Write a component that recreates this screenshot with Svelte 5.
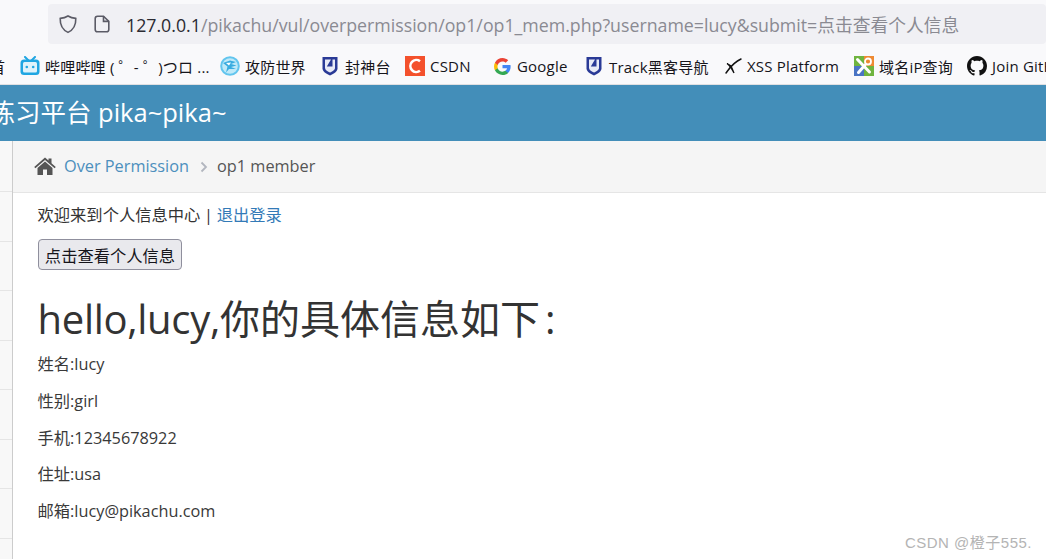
<script>
	const bookmarks = [
		{ icon: 'bili', label: '哔哩哔哩 ( ゜- ゜)つロ ...', width: 200 },
		{ icon: 'gongfang', label: '攻防世界', width: 100 },
		{ icon: 'track', label: '封神台', width: 85 },
		{ icon: 'csdn', label: 'CSDN', width: 87 },
		{ icon: 'google', label: 'Google', width: 92 },
		{ icon: 'track', label: 'Track黑客导航', width: 138 },
		{ icon: 'xss', label: 'XSS Platform', width: 132 },
		{ icon: 'ip', label: '域名iP查询', width: 113 },
		{ icon: 'github', label: 'Join GitHub', width: 110 }
	];

	const info = [
		'姓名:lucy',
		'性别:girl',
		'手机:12345678922',
		'住址:usa',
		'邮箱:lucy@pikachu.com'
	];

	const sideRows = [0, 1, 2, 3, 4, 5, 6, 7];
</script>

<div class="page">
	<div class="toolbar">
		<div class="urlbar">
			<svg class="shield" viewBox="0 0 20 20" width="20" height="20" fill="none" stroke="#5b5b66" stroke-width="1.6">
				<path d="M10 2 C7.500 3.600 5 4.200 2.200 4.400 C2 10 3.600 15.400 10 18.400 C16.400 15.400 18 10 17.800 4.400 C15 4.200 12.500 3.600 10 2 Z" />
			</svg>
			<svg class="doc" viewBox="0 0 16 18" width="16" height="18" fill="none" stroke="#5b5b66" stroke-width="1.6">
				<path d="M3.500 1.200 H9.500 L14.800 6.400 V14.500 A2.300 2.300 0 0 1 12.500 16.800 H3.500 A2.300 2.300 0 0 1 1.200 14.500 V3.500 A2.300 2.300 0 0 1 3.500 1.200 Z" />
				<path d="M9.500 1.200 V6.400 H14.800" />
			</svg>
			<span class="url"><b>127.0.0.1</b>/pikachu/vul/overpermission/op1/op1_mem.php?username=lucy&amp;submit=点击查看个人信息</span>
		</div>
	</div>

	<div class="bookmarks">
		<span class="bm cut">首</span>
		{#each bookmarks as b}
			<span class="bm" style="width: {b.width}px">
				<span class="ico">
					{#if b.icon === 'bili'}
						<svg viewBox="0 0 20 20" width="20" height="20">
							<path d="M5 1 L8 4 M15 1 L12 4" stroke="#20a6e2" stroke-width="2" stroke-linecap="round" />
							<rect x="0.500" y="3.500" width="19" height="15.500" rx="3.500" fill="#20a6e2" />
							<rect x="3" y="6" width="14" height="10.500" rx="1.500" fill="#dff3fb" />
							<circle cx="6.800" cy="11" r="1.300" fill="#20a6e2" />
							<circle cx="13.200" cy="11" r="1.300" fill="#20a6e2" />
						</svg>
					{:else if b.icon === 'gongfang'}
						<svg viewBox="0 0 20 20" width="20" height="20">
							<circle cx="10" cy="10" r="9.800" fill="#62c5ee" />
							<circle cx="10" cy="10" r="7.800" fill="#bfe9f8" />
							<path d="M3 7 L10 4.500 L16 6 L11 8 L16.500 9.500 L11 11 L16 13 L9 13 L6 16.500 L7.500 10.500 Z" fill="#39ace0" />
							<path d="M6 7 L11 6.400 L9 9.500 Z" fill="#fff" />
						</svg>
					{:else if b.icon === 'track'}
						<svg viewBox="0 0 16 20" width="16" height="20">
							<path d="M0.500 1 H15.500 V12.500 C15.500 15.500 12 17.500 8 19.500 C4 17.500 0.500 15.500 0.500 12.500 Z" fill="#2a3a96" />
							<path d="M3 3.500 H9 L4.800 10.500 H10.500 V3.500 H13 V12 C13 14 10 15.500 8 16.600 C6 15.500 3 14 3 12 Z" fill="#e8eaf6" />
						</svg>
					{:else if b.icon === 'csdn'}
						<svg viewBox="0 0 20 20" width="20" height="20">
							<rect width="20" height="20" fill="#f4512c" />
							<path d="M15 5.200 A6 6 0 1 0 15 14.800" fill="none" stroke="#fff" stroke-width="2.600" />
						</svg>
					{:else if b.icon === 'google'}
						<svg viewBox="0 0 18 18" width="17" height="17">
							<path d="M17.600 9.200c0-.6-.1-1.200-.2-1.800H9v3.500h4.800c-.2 1.100-.8 2-1.800 2.700v2.200h2.900c1.700-1.600 2.700-3.900 2.700-6.600z" fill="#4285f4" />
							<path d="M9 18c2.400 0 4.500-.8 5.900-2.200L12 13.600c-.8.500-1.800.9-3 .9-2.300 0-4.300-1.600-5-3.700H1v2.300C2.400 16 5.500 18 9 18z" fill="#34a853" />
							<path d="M4 10.700c-.4-1.100-.4-2.300 0-3.400V5H1c-1.300 2.500-1.300 5.500 0 8z" fill="#fbbc05" />
							<path d="M9 3.600c1.300 0 2.500.5 3.400 1.300L15 2.400C13.500 1 11.400 0 9 0 5.500 0 2.400 2 1 5l3 2.300c.7-2.100 2.700-3.700 5-3.700z" fill="#ea4335" />
						</svg>
					{:else if b.icon === 'xss'}
						<svg viewBox="0 0 20 20" width="20" height="20" fill="none" stroke="#111" stroke-linecap="round">
							<path d="M4 17 C7 13 11 6.500 19 3" stroke-width="1.500" />
							<path d="M5 7.500 C7 9 10 13 12 17 L9 10 Z" fill="#111" stroke-width="1.300" />
						</svg>
					{:else if b.icon === 'ip'}
						<svg viewBox="0 0 20 20" width="20" height="20">
							<rect width="10" height="10" fill="#6fb43f" />
							<rect x="10" width="10" height="10" fill="#ee8a33" />
							<rect y="10" width="10" height="10" fill="#4a74c4" />
							<rect x="10" y="10" width="10" height="10" fill="#6fb43f" />
							<path d="M3.500 3.500 L15.500 16 M11 9 L4.500 16.500" stroke="#fff" stroke-width="3" stroke-linecap="round" />
							<circle cx="14" cy="5.500" r="3" fill="#ee8a33" stroke="#fff" stroke-width="1.800" />
						</svg>
					{:else if b.icon === 'github'}
						<svg viewBox="0 0 16 16" width="20" height="20">
							<path fill="#111" d="M8 0C3.580 0 0 3.580 0 8c0 3.540 2.290 6.530 5.470 7.590.4.070.55-.17.55-.38 0-.19-.01-.82-.01-1.490-2.010.37-2.530-.49-2.690-.94-.09-.23-.48-.94-.82-1.130-.28-.15-.68-.52-.01-.53.63-.01 1.080.58 1.230.82.72 1.210 1.870.87 2.330.66.070-.52.28-.87.51-1.070-1.780-.2-3.640-.89-3.640-3.950 0-.87.31-1.590.82-2.150-.08-.2-.36-1.020.08-2.120 0 0 .67-.21 2.200.82.64-.18 1.320-.27 2-.27s1.360.09 2 .27c1.530-1.040 2.200-.82 2.200-.82.44 1.100.16 1.920.08 2.120.51.560.82 1.270.82 2.150 0 3.070-1.870 3.750-3.650 3.950.29.250.54.730.54 1.480 0 1.070-.01 1.930-.01 2.200 0 .21.150.460.550.380A8.010 8.010 0 0 0 16 8c0-4.420-3.580-8-8-8z" />
						</svg>
					{/if}
				</span>
				<span class="bm-label">{b.label}</span>
			</span>
		{/each}
	</div>

	<header class="navbar">
		<span class="brand">Pikachu 漏洞练习平台 pika~pika~</span>
	</header>

	<div class="main">
		<aside class="sidebar">
			{#each sideRows as r}
				<div class="side-row" class:first={r === 0}></div>
			{/each}
		</aside>

		<div class="content">
			<nav class="breadcrumb">
				<svg class="home" viewBox="0 0 22 18" width="22" height="18">
					<path fill="#555" d="M11 0.500 L14.500 3.600 V1.500 H17.500 V6.300 L21.800 10.100 L20.600 11.300 L11 3 L1.400 11.300 L0.200 10.100 Z" />
					<path fill="#555" d="M11 4.600 L18.500 11 V18 H13 V12.500 H9 V18 H3.500 V11 Z" />
				</svg>
				<a href="#top">Over Permission</a>
				<svg class="sep" viewBox="0 0 8 12" width="8" height="12" fill="none" stroke="#b2b6bf" stroke-width="1.800">
					<path d="M1.500 1.500 L6 6 L1.500 10.500" />
				</svg>
				<span>op1 member</span>
			</nav>

			<div class="body">
				<p class="welcome">欢迎来到个人信息中心 | <a href="#top">退出登录</a></p>
				<button type="button">点击查看个人信息</button>
				<h1><span class="latin">hello,lucy,</span>你的具体信息如下<span class="colon">:</span></h1>
				{#each info as line}
					<p class="line">{line}</p>
				{/each}
			</div>
		</div>
	</div>

	<div class="watermark">CSDN @橙子555.</div>
</div>

<style>
	:global(body) {
		margin: 0;
		background: #fff;
	}

	.page {
		position: relative;
		width: 1046px;
		height: 559px;
		overflow: hidden;
		font-family: "Open Sans", "Noto Sans CJK SC", sans-serif;
		color: #393939;
	}

	.toolbar {
		height: 44px;
		padding-top: 4px;
		box-sizing: border-box;
		padding-left: 48px;
		background: #f9f9fb;
	}

	.urlbar {
		display: flex;
		align-items: center;
		height: 40px;
		padding-left: 10px;
		background: #f0f0f4;
		border-radius: 4px;
	}

	.shield {
		margin-right: 16px;
	}

	.doc {
		margin-right: 16px;
	}

	.url {
		font-size: 17.750px;
		color: #8a8a92;
		white-space: nowrap;
	}

	.url b {
		font-weight: 400;
		color: #2b2b33;
	}

	.bookmarks {
		display: flex;
		align-items: center;
		height: 41px;
		box-sizing: border-box;
		padding-top: 4px;
		margin-left: -10px;
		background: #f9f9fb;
		border-bottom: 1px solid #e0e0e2;
		white-space: nowrap;
		font-size: 15px;
		letter-spacing: 0.200px;
		color: #15141a;
	}

	.bm {
		display: flex;
		align-items: center;
		flex: none;
		gap: 5px;
	}

	.bm.cut {
		width: 30px;
	}

	.ico {
		display: flex;
		flex: none;
		justify-content: center;
		width: 20px;
	}

	.navbar {
		display: flex;
		align-items: center;
		height: 56px;
		background: #438eb9;
		overflow: hidden;
	}

	.brand {
		margin: -6px 0 0 -161px;
		flex: none;
		font-size: 25.500px;
		color: #fff;
		white-space: nowrap;
	}

	.main {
		display: flex;
		height: 418px;
	}

	.sidebar {
		flex: none;
		width: 12px;
		background: #f8f8f8;
		border-right: 1px solid #ccc;
	}

	.side-row {
		height: 49.500px;
		border-bottom: 1px solid #e5e5e5;
		box-sizing: border-box;
	}

	.side-row.first {
		height: 51px;
	}

	.content {
		flex: 1;
		min-width: 0;
	}

	.breadcrumb {
		display: flex;
		align-items: center;
		height: 52px;
		box-sizing: border-box;
		padding: 0 0 2px 21px;
		background: #f5f5f5;
		border-bottom: 1px solid #e5e5e5;
		font-size: 16.300px;
		color: #555;
	}

	.breadcrumb a {
		margin-left: 8px;
		color: #4c8fbd;
		text-decoration: none;
	}

	.sep {
		margin: 2px 9px 0 11px;
	}

	.body {
		padding: 10px 0 0 24.500px;
	}

	.welcome {
		margin: 0;
		font-size: 16.300px;
		line-height: 24px;
		word-spacing: -0.500px;
		color: #333;
	}

	.welcome a {
		color: #337ab7;
		text-decoration: none;
	}

	button {
		display: block;
		box-sizing: border-box;
		width: 144px;
		height: 31px;
		margin: 12px 0 0 0.500px;
		padding: 0;
		background: #e9e9ed;
		border: 1px solid #8f8f9d;
		border-radius: 4px;
		font: inherit;
		font-size: 16.300px;
		color: #15141a;
	}

	h1 {
		margin: 25px 0 0;
		font-size: 40px;
		font-weight: 400;
		line-height: 48px;
		color: #333;
	}

	.latin {
		letter-spacing: -0.300px;
	}

	.colon {
		margin-left: 5px;
	}

	.line {
		margin: 0 0 12.800px;
		font-size: 16.300px;
		line-height: 24px;
		color: #393939;
	}

	h1 + .line {
		margin-top: 9px;
	}

	.watermark {
		position: absolute;
		right: 14px;
		bottom: 7px;
		font-family: "Liberation Sans", "Noto Sans CJK SC", sans-serif;
		font-size: 15px;
		color: #b4b4b4;
		letter-spacing: 0.500px;
	}
</style>
